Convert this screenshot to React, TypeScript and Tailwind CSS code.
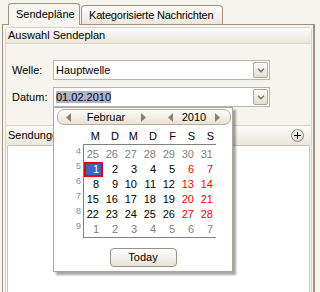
import React from "react";

type Day = { n: number; kind: "grey" | "normal" | "red" | "selected" };

const weeks: { wk: number; days: Day[] }[] = [
  { wk: 4, days: [25, 26, 27, 28, 29, 30, 31].map((n) => ({ n, kind: "grey" as const })) },
  {
    wk: 5,
    days: [1, 2, 3, 4, 5, 6, 7].map((n, i) => ({
      n,
      kind: i === 0 ? ("selected" as const) : i >= 5 ? ("red" as const) : ("normal" as const),
    })),
  },
  ...[8, 15, 22].map((start, w) => ({
    wk: 6 + w,
    days: Array.from({ length: 7 }, (_, i) => ({
      n: start + i,
      kind: i >= 5 ? ("red" as const) : ("normal" as const),
    })),
  })),
  { wk: 9, days: [1, 2, 3, 4, 5, 6, 7].map((n) => ({ n, kind: "grey" as const })) },
];

const dayNames = ["M", "D", "M", "D", "F", "S", "S"];

function Arrow({ dir }: { dir: "left" | "right" }) {
  return (
    <svg width="5" height="9" viewBox="0 0 5 9" className="shrink-0">
      <polygon
        points={dir === "left" ? "5,0 0,4.5 5,9" : "0,0 5,4.5 0,9"}
        fill="#8d8073"
      />
    </svg>
  );
}

function Combo({ value, selected }: { value: string; selected?: boolean }) {
  return (
    <div className="w-[217px] h-[20px] border border-[#bfb5a7] bg-white flex items-center">
      <div className="flex-1 pl-[2px] leading-[12px]">
        {selected ? <span className="bg-[#aeb5c8] px-0 py-[0px]">{value}</span> : value}
      </div>
      <div className="w-[15px] h-[16px] mr-[1px] rounded-[2px] border border-[#b3a696] bg-gradient-to-b from-[#fcfbf8] to-[#e6dfd2] flex items-center justify-center">
        <svg width="8" height="5" viewBox="0 0 8 5">
          <path d="M1 0.8 L4 3.8 L7 0.8" fill="none" stroke="#7c6d5f" strokeWidth="1.3" />
        </svg>
      </div>
    </div>
  );
}

export default function App() {
  return (
    <div className="relative w-[320px] h-[292px] overflow-hidden bg-[#f5f4ef] text-[11px] text-black font-['Liberation_Sans',Arial,sans-serif]">
      {/* Tabs */}
      <div className="relative z-10 flex items-end h-[24px] pl-[8px]">
        <div className="h-[22px] w-[72px] -mb-px border border-b-0 border-[#a3917f] rounded-t-[4px] bg-[#f6f5f0] flex items-center pl-[7px]">
          Sendepläne
        </div>
        <div className="h-[19px] w-[142px] ml-[1px] border border-b-0 border-[#a3917f] rounded-t-[4px] bg-gradient-to-b from-[#fdfcfa] to-[#ebe7dc] flex items-center pl-[7px] tracking-[-0.2px]">
          Kategorisierte Nachrichten
        </div>
      </div>

      {/* Tab panel */}
      <div className="ml-[2px] w-[313px] h-[280px] border-t border-l border-r-2 border-[#a08f7f] bg-[#f5f4ef] pl-[2px] pt-[2px]">
        {/* Auswahl Sendeplan */}
        <div className="w-[307px] border border-[#d8d2c6] rounded-t-[3px]">
          <div className="h-[16px] border-b border-[#dcd6ca] bg-gradient-to-b from-[#fcfbf9] to-[#ebe7dd] flex items-center pl-[2px]">
            Auswahl Sendeplan
          </div>
          <div className="pt-[16px] pb-[18px] flex flex-col gap-[7px]">
            <div className="flex items-center">
              <div className="w-[47px] pl-[6px]">Welle:</div>
              <Combo value="Hauptwelle" />
            </div>
            <div className="flex items-center">
              <div className="w-[47px] pl-[6px]">Datum:</div>
              <Combo value="01.02.2010" selected />
            </div>
          </div>
        </div>

        {/* Sendungen */}
        <div className="w-[307px] border-x border-[#d8d2c6]">
          <div className="h-[19px] bg-gradient-to-b from-[#fcfbf9] to-[#ebe7dd] flex items-center justify-between pl-[2px] pr-[7px]">
            <span>Sendungen</span>
            <div className="w-[13px] h-[13px] rounded-full border border-[#8c7e71] bg-gradient-to-b from-white to-[#e4ded2] flex items-center justify-center">
              <svg width="7" height="7" viewBox="0 0 7 7">
                <path d="M3.5 0 V7 M0 3.5 H7" stroke="#000" strokeWidth="1" />
              </svg>
            </div>
          </div>
          <div className="mx-[1px] h-[150px] border border-[#cbc3b6] bg-white" />
        </div>
      </div>

      {/* Calendar popup */}
      <div className="absolute left-[53px] top-[107px] w-[180px] h-[165px] border border-[#aaa69e] bg-white shadow-[3px_3px_2px_rgba(0,0,0,0.35)]">
        <div className="mt-[1px] ml-[3px] w-[174px] h-[16px] rounded-[7px] border border-[#b8ab9a] bg-gradient-to-b from-[#fdfcfa] to-[#e8e2d5] flex items-center">
          <div className="ml-[8px] w-[80px] flex items-center justify-between">
            <Arrow dir="left" />
            <span>Februar</span>
            <Arrow dir="right" />
          </div>
          <div className="ml-[22px] w-[52px] flex items-center justify-between">
            <Arrow dir="left" />
            <span>2010</span>
            <Arrow dir="right" />
          </div>
        </div>

        <div className="flex mt-[5px]">
          <div className="w-[29px]" />
          <div className="grid grid-cols-[repeat(7,19px)] pl-[1px]">
            {dayNames.map((d, i) => (
              <div key={i} className="h-[12px] leading-[12px] text-right pr-[3px]">
                {d}
              </div>
            ))}
          </div>
        </div>

        <div className="flex mt-[2px]">
          <div className="w-[29px] pt-[3px] flex flex-col">
            {weeks.map((w) => (
              <div key={w.wk} className="h-[15px] text-[9px] leading-[9px] text-right pr-[2px] text-[#8a8a8a]">
                {w.wk}
              </div>
            ))}
          </div>
          <div className="w-[133px] border-l border-y border-[#808080] pt-[2px] grid grid-cols-[repeat(7,19px)]">
            {weeks.flatMap((w) =>
              w.days.map((d, i) => (
                <div
                  key={`${w.wk}-${i}`}
                  className={
                    d.kind === "selected"
                      ? "h-[15px] flex items-center justify-end pr-[2px] bg-[#316ac5] text-white border-2 border-[#f00000]"
                      : d.kind === "grey"
                      ? "h-[15px] flex items-center justify-end pr-[4px] text-[#808080]"
                      : d.kind === "red"
                      ? "h-[15px] flex items-center justify-end pr-[4px] text-[#ff0000]"
                      : "h-[15px] flex items-center justify-end pr-[4px]"
                  }
                >
                  {d.n}
                </div>
              ))
            )}
          </div>
        </div>

        <div className="flex justify-center mt-[10px]">
          <div className="w-[67px] h-[19px] rounded-[4px] border border-[#a08f80] bg-gradient-to-b from-white to-[#e8e3d6] flex items-center justify-center">
            Today
          </div>
        </div>
      </div>
    </div>
  );
}
